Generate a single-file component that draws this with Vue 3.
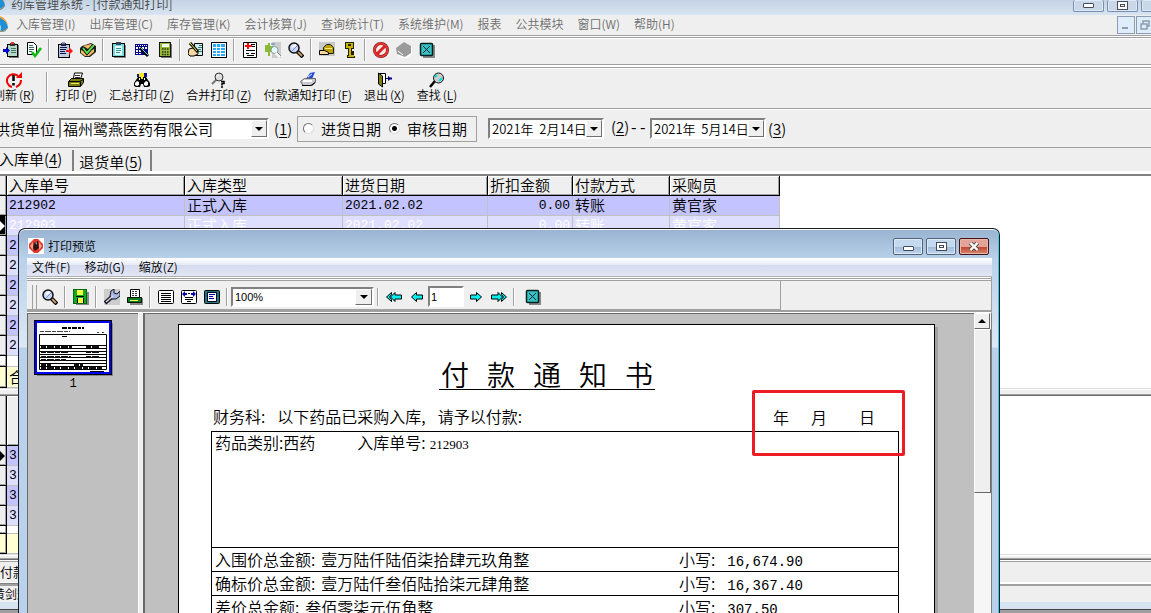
<script setup>
import { ref } from 'vue'

const mainMenu = ['入库管理(I)', '出库管理(C)', '库存管理(K)', '会计核算(J)', '查询统计(T)', '系统维护(M)', '报表', '公共模块', '窗口(W)', '帮助(H)']

const iconGroups = [
  [['clip-in', '入库'], ['doc-check', '审核']],
  [['clip-out', '出库'], ['box-check', '验收']],
  [['clip', '单据'], ['grid-edit', '编辑表格'], ['calc', '计算器']],
  [['hand-doc', '登记'], ['grid', '表格']],
  [['medic', '药品'], ['tree-find', '目录查找'], ['lens', '查询']],
  [['folder', '打开'], ['key', '密码']],
  [['forbid', '停用'], ['stone', '清除'], ['close-box', '关闭']],
]

const actions = [
  { t: '打印', k: 'P', i: 'printer' },
  { t: '汇总打印', k: 'Z', i: 'binoculars' },
  { t: '合并打印', k: 'Z', i: 'lens-q' },
  { t: '付款通知打印', k: 'F', i: 'printer-blue' },
  { t: '退出', k: 'X', i: 'exit' },
  { t: '查找', k: 'L', i: 'find' },
]

const columns = ['入库单号', '入库类型', '进货日期', '折扣金额', '付款方式', '采购员']
const rows = [
  ['212902', '正式入库', '2021.02.02', '0.00', '转账', '黄官家'],
  ['212903', '正式入库', '2021.02.02', '0.00', '转账', '黄官家'],
  ...Array.from({ length: 6 }, () => ['2', '', '', '', '', '']),
]

const dateKind = ref('audit')
const supplier = ref('福州鹭燕医药有限公司')
const from = ref('2021年  2月14日')
const to = ref('2021年  5月14日')
const zoom = ref('100%')
const page = ref('1')

const previewMenu = ['文件(F)', '移动(G)', '缩放(Z)']
const previewIcons = [
  [['lens', '缩放']],
  [['save', '保存']],
  [['wrench', '设置'], ['printer-green', '打印']],
  [['page-lines', '实际大小'], ['page-width', '页宽'], ['page-full', '整页']],
]
const totals = [
  ['入围价总金额:', '壹万陆仟陆佰柒拾肆元玖角整', '16,674.90'],
  ['确标价总金额:', '壹万陆仟叁佰陆拾柒元肆角整', '16,367.40'],
  ['差价总金额:', '叁佰零柒元伍角整', '307.50'],
]
</script>

<template>
  <svg class="defs" aria-hidden="true">
    <symbol id="clip-in" viewBox="0 0 16 16"><path fill="#777" d="M5 3h11v13H6z" /><path fill="#000" d="M4 2h11v13H4z" /><path fill="#b5d8c4" d="M5 3h9v11H5z" /><path fill="#333" d="M7 1h5v3H7z" /><path fill="#e33" d="M8 0h3v2H8z" /><path stroke="#476" d="M8 6.500h5M8 8.500h5M8 10.500h5" /><path fill="#00c" d="M0 7h3V5l4 3.500-4 3.500v-2H0z" /></symbol>
    <symbol id="doc-check" viewBox="0 0 16 16"><path fill="#fff" stroke="#000" d="M1.500.5h6l3 3v9h-9z" /><path stroke="#366" d="M3 3.500h4M3 5.500h5M3 7.500h5M3 9.500h3" /><path fill="none" stroke="#1b1" stroke-width="2.500" d="M6 10l3 4 6-8" /></symbol>
    <symbol id="clip-out" viewBox="0 0 16 16"><path fill="#000" d="M1 2h12v14H1z" /><path fill="#bcd" d="M2 3h10v12H2z" /><path fill="#224" d="M4 1h5v3H4z" /><path fill="#88a" d="M5 0h3v2H5z" /><path stroke="#115" d="M3 5.500h7M3 7.500h6M3 9.500h5M3 11.500h6" /><path fill="#f02020" d="M9 8h3V5l4 4-4 4v-3H9z" /></symbol>
    <symbol id="box-check" viewBox="0 0 16 16"><path fill="#222" d="M2 4l9-3 5 3v6l-6 5H5l-5-4V6z" /><path fill="#f0b860" d="M3 4l8-2 3 2-6 3zM1 8l5 2 8-3v3l-5 4H5l-4-3z" /><path fill="none" stroke="#000" stroke-width="3.500" d="M3 6l4 5 7-8" /><path fill="none" stroke="#5d5" stroke-width="2" d="M3 6l4 5 7-8" /></symbol>
    <symbol id="clip" viewBox="0 0 16 16"><path fill="#888" d="M3 3h12v13H3z" /><path fill="#000" d="M1 1h13v14H1z" /><path fill="#6fdce0" d="M2 2h11v12H2z" /><path fill="#e8ffff" d="M4 4h7v9H4z" /><path fill="#345" d="M5 0h5v3H5z" /><path stroke="#399" d="M5 6.500h5M5 8.500h5M5 10.500h4" /></symbol>
    <symbol id="grid-edit" viewBox="0 0 16 16"><path fill="#008" d="M1 2h13v11H1z" /><path fill="#fff" d="M2 5h2v2H2zM5 5h2v2H5zM8 5h2v2H8zM11 5h2v2h-2zM2 8h2v2H2zM5 8h2v2H5zM2 11h2v1H2zM5 11h2v1H5z" /><path stroke="#fff" stroke-dasharray="1 1" d="M2 3.500h11" /><path stroke="#000" stroke-width="3" d="M6 6l8 8" /><path stroke="#5dd" d="M7 6l7 7" /></symbol>
    <symbol id="calc" viewBox="0 0 16 16"><path fill="#777" d="M4 2h11v14H4z" /><path fill="#111" d="M2 0h12v15H2z" /><path fill="#9ab83c" d="M3 1h10v13H3z" /><path fill="#efe" d="M5 2h7v3H5z" /><path stroke="#231" stroke-width="1.500" stroke-dasharray="1.500 1" d="M5 7h7M5 10h7M5 12.500h7" /></symbol>
    <symbol id="hand-doc" viewBox="0 0 16 16"><path fill="#cef0e8" stroke="#000" d="M6.500 1.500h8v12h-8z" /><path stroke="#377" d="M11 3.500h3M10 5.500h4M10 7.500h3M11 9.500h3" /><path fill="#f4d8a0" stroke="#000" d="M1 7l4-1 5 3v3l-4 2H2L0 12z" /><path stroke="#000" stroke-width="3" d="M2 1l8 9" /><path stroke="#ff3" d="M2 1l7 8" /></symbol>
    <symbol id="grid" viewBox="0 0 16 16"><path fill="#000" d="M0 0h16v16H0z" /><path fill="#fff" d="M1 1h14v14H1z" /><path fill="#28a8ff" d="M2 2h12v12H2z" /><path stroke="#fff" d="M5.500 2v12M9.500 2v12M2 5.500h12M2 8.500h12M2 11.500h12" /></symbol>
    <symbol id="medic" viewBox="0 0 16 16"><path fill="#fff" stroke="#000" d="M1.500.5h13v15h-13z" /><path fill="#f01010" d="M3 3h2V1h2v2h3v2H7v2H5V5H3z" /><path stroke="#000" d="M9 2.500h4M10 4.500h3M4 8.500h9M4 11.500h3M9 11.500h4M5 13.500h7" /></symbol>
    <symbol id="tree-find" viewBox="0 0 16 16"><path fill="#ccc" d="M7 0h9v16H7z" /><path fill="#8b3" d="M0 3h3V1h2v3h3v3H6l2 3H5v4H3v-4H0z" /><path stroke="#48b" d="M6 2h4M7 5h3" /><circle cx="9.500" cy="8" r="3.500" fill="#dff" stroke="#999" /><path stroke="#fff" stroke-width="3" d="M11 11l4 4" /><path stroke="#888" d="M12 10l4 4" /></symbol>
    <symbol id="lens" viewBox="0 0 16 16"><path stroke="#000" stroke-width="4" d="M9 9l6 6" /><path stroke="#c96" stroke-width="2" d="M10 10l4 4" /><circle cx="6" cy="6" r="5" fill="#c8d8ff" stroke="#111" stroke-width="1.500" /><path stroke="#fff" stroke-width="2" d="M4 5l4-2" /><path stroke="#88a" d="M4 9l5-5" /></symbol>
    <symbol id="folder" viewBox="0 0 16 16"><path fill="#c8c8c8" d="M0 0h16v14H0z" /><path fill="#b9a000" stroke="#221" d="M4.500 5.500l3-3h4l3 3v6h-10z" /><path stroke="#ffec70" d="M6 6.500h7" /><path fill="#f4d8a0" stroke="#000" d="M.5 8.500h5l4 2v2h-9z" /></symbol>
    <symbol id="key" viewBox="0 0 16 16"><path fill="#231e00" d="M3 0h9v7h-2v2h2v5h1v2H5v-3h1V7H3z" /><path fill="#c9b500" d="M4 1h7v5H9v7h3v2H6v-1h1V6H4z" /><path fill="#222" d="M6 2h3v2H6z" /></symbol>
    <symbol id="forbid" viewBox="0 0 16 16"><circle cx="8" cy="8" r="6.500" fill="#ffe9e4" stroke="#622" stroke-width="3" /><circle cx="8" cy="8" r="6.500" fill="none" stroke="#e33" stroke-width="2" /><path stroke="#d22" stroke-width="3" d="M4 12l8-8" /></symbol>
    <symbol id="stone" viewBox="0 0 16 16"><path fill="#fff" d="M1 7l8-6 7 4v7l-6 5-8-3z" /><path fill="#9b9b9b" d="M0 6l8-6 7 4v7l-6 4-8-3z" /><path stroke="#fff" d="M2 9l5 4" /></symbol>
    <symbol id="close-box" viewBox="0 0 16 16"><path fill="#888" d="M4 3h12v13H4z" /><rect x="1.500" y="1.500" width="12" height="12" rx="1" fill="#35c2c4" stroke="#002020" stroke-width="1.500" /><path stroke="#023" d="M4 4l7 7M11 4l-7 7" /></symbol>
    <symbol id="refresh" viewBox="0 0 16 16"><path fill="none" stroke="#f00000" stroke-width="2" d="M6 15a6.500 6.500 0 1 1 6-11M10 15q5-2 5-7" /><path fill="#f00000" d="M10 6h6V0z" /><path stroke="#000" stroke-width="2.500" d="M7.500 3v6M7.500 11v2.500" /></symbol>
    <symbol id="printer" viewBox="0 0 16 16"><path fill="#fff" stroke="#000" d="M5.500 6l1-5h8l-2 6" /><path stroke="#333" d="M7 3.500h5M7 5.500h5" /><path fill="#7c7c12" stroke="#000" d="M.5 9.500l3-3h12v4l-3 4H.5z" /><path stroke="#000" d="M1 9.500h11l3-2M12.500 10v4" /><path stroke="#e8e860" d="M3 11.500h8" /></symbol>
    <symbol id="binoculars" viewBox="0 0 16 16"><path fill="#f8e820" d="M5 1h6v7H5z" /><path fill="#10108c" d="M3 2h2v3H3zM10 1h3v4h-3z" /><path fill="#000" d="M4 5h3v2h2V5h3l4 6v3l-2 1h-4l-1-3H7l-1 3H2l-2-1v-3z" /><path fill="#fff" d="M1 11l2-2 2 1v3l-2 1-2-1zM10 11l2-2 2 1v3l-2 1-2-1zM5 6h1v2H5zM10 6h1v2h-1z" /></symbol>
    <symbol id="lens-q" viewBox="0 0 16 16"><path stroke="#777" stroke-width="2" d="M1 12l5-5" /><circle cx="8" cy="5" r="4" fill="#dcdcdc" stroke="#333" /><path fill="none" stroke="#fff" d="M6 5q0-2 2-2" /><path fill="none" stroke="#000" stroke-width="1.500" d="M10 9.500h3v2h-2v2M11 14v2" /></symbol>
    <symbol id="printer-blue" viewBox="0 0 16 16"><path fill="#2048e0" d="M6 7l4-6 5-1-3 7z" /><path stroke="#fff" d="M8 5l4-3" /><path fill="#c8c8d0" stroke="#666" d="M.5 9.500l4-3h11v4l-3 3H3z" /><path stroke="#000" d="M2 13.500h9l4-3" /><path stroke="#fff" stroke-width="2" d="M3 9h9" /></symbol>
    <symbol id="exit" viewBox="0 0 16 16"><path fill="#fff" stroke="#000" d="M3.500 1.500h6v10h-6z" /><path fill="#7e7e10" stroke="#000" d="M2.500 1l4 3v11l-4-3z" /><path fill="#000080" d="M10 6h2V4l2 1.500h2v2h-2L12 9V7h-2z" /></symbol>
    <symbol id="find" viewBox="0 0 16 16"><path stroke="#000" stroke-width="2.500" d="M1 15l5-6" /><circle cx="9.500" cy="6" r="5" fill="#ccc" stroke="#111" /><path stroke="#0dd" d="M6 5l2-2M10 9l3-3" stroke-width="2" /></symbol>
    <symbol id="save" viewBox="0 0 16 16"><path fill="#888" d="M3 3h13v13H3z" /><path fill="#061" d="M0 0h14v15H0z" /><path fill="#1a2" d="M1 1h12v13H1z" /><path fill="#ff4" d="M4 1h6v5H4zM5 9h5v5H5z" /><path fill="#000" d="M3 7h8v1H3zM4 9h1v5H4zM10 9h1v5h-1z" /></symbol>
    <symbol id="wrench" viewBox="0 0 16 16"><path fill="#ccc" d="M0 0h16v16H0z" /><path stroke="#112" stroke-width="4" d="M1 14l8-7" /><path fill="#a9b8e0" stroke="#112" d="M7 2l3-2v4l3 1 3-3v5l-4 3H8L6 7z" /><path stroke="#dde" stroke-width="1.500" d="M2 13l7-6" /></symbol>
    <symbol id="printer-green" viewBox="0 0 16 16"><path fill="#888" d="M3 9h13v7H3z" /><path fill="#fff" stroke="#000" d="M3.500 8V.5h9V8" /><path stroke="#333" stroke-dasharray="2 1" d="M5 2.500h6M5 4.500h6M5 6.500h6" /><path fill="#0b7a20" stroke="#010" d="M.5 8.500h14v5h-14z" /><path stroke="#ff5" d="M3 11.500h8" /></symbol>
    <symbol id="page-lines" viewBox="0 0 16 16"><rect x=".5" y="1.500" width="15" height="13" rx="1" fill="#fff" stroke="#000" /><path stroke="#000" d="M3 4.500h10M3 6.500h10M3 8.500h10M3 10.500h10M3 12.500h10" /></symbol>
    <symbol id="page-width" viewBox="0 0 16 16"><rect x=".5" y="1.500" width="15" height="13" rx="1" fill="#fff" stroke="#000" /><path fill="#00b" d="M1 5l3-3v2h2v2H4v2zM15 5l-3-3v2h-2v2h2v2z" /><path stroke="#000" d="M7 4.500h2M4 8.500h8M4 10.500h8M6 12.500h4" /></symbol>
    <symbol id="page-full" viewBox="0 0 16 16"><rect x=".5" y="1.500" width="15" height="13" rx="1" fill="#277" stroke="#000" /><path fill="#fff" stroke="#003" d="M3.500 3.500h9v9h-9z" /><path stroke="#00a" d="M5 5.500h6M5 7.500h4M5 9.500h5" /></symbol>
    <symbol id="prev" viewBox="0 0 16 16"><path fill="#00f0f0" stroke="#000" d="M2.500 8l5-4.500V6h6v4h-6v2.500z" /></symbol>
    <symbol id="first" viewBox="0 0 16 16"><path fill="#00f0f0" stroke="#000" d="M4.500 8l4.500-4.500V6h6.500v4H9v2.500z" /><path fill="#00f0f0" stroke="#000" d="M5.500 3.500v2L3.500 8l2 2.500v2L.5 8z" /></symbol>
    <symbol id="swirl" viewBox="0 0 16 16"><path fill="#1d8fd8" d="M1 4q6-4 10 0t4 8q-3 5-8 4 3-9-6-12z" /><path fill="#f59a2c" d="M2 0q10-1 13 9-4-7-13-9zM4 16q7 0 11-5-3 6-11 5z" /></symbol>
    <symbol id="gem" viewBox="0 0 16 16"><path fill="#fff" d="M0 0h16v16H0z" /><path fill="#e03a2e" d="M6 1h4l2 2 3 3v4l-3 3-2 2H6l-2-2-3-3V6l3-3z" /><path fill="#f7a28f" d="M2 8l3-4v8zM14 8l-3-4v8z" /><path fill="#301414" d="M6 5l4-2 1 7-4 3-2-3z" /><path fill="#999" d="M7 5l2-1v3z" /></symbol>
  </svg>

  <main class="screen">
    <header class="titlebar">
      <svg class="logo"><use href="#swirl" /></svg>
      <span class="caption">药库管理系统 - [付款通知打印]</span>
      <div class="winbtns">
        <button class="wb" aria-label="最小化"><i class="g-min"></i></button>
        <button class="wb" aria-label="还原"><i class="g-max"></i></button>
        <button class="wb" aria-label="关闭"></button>
      </div>
    </header>
    <nav class="menubar">
      <svg class="logo"><use href="#swirl" /></svg>
      <button v-for="m in mainMenu" :key="m">{{ m }}</button>
      <div class="mdi">
        <button aria-label="最小化子窗口"><svg viewBox="0 0 16 16"><path stroke="#8c9db3" stroke-width="2" d="M4 11h6" /></svg></button>
        <button aria-label="还原子窗口"><svg viewBox="0 0 16 16"><path fill="none" stroke="#8c9db3" stroke-width="1.500" d="M6 7V4h6v5h-2M4 7h6v5H4z" /></svg></button>
      </div>
    </nav>
    <div class="bar icons">
      <div v-for="(g, n) in iconGroups" :key="n" class="group">
        <button v-for="i in g" :key="i[0]" :aria-label="i[1]"><svg><use :href="'#' + i[0]" /></svg></button>
      </div>
    </div>
    <div class="bar actions">
      <button class="first"><svg><use href="#refresh" /></svg><span class="lab"><span>刷新</span><span>(<u>R</u>)</span></span></button>
      <i class="sep"></i>
      <button v-for="a in actions" :key="a.t"><svg><use :href="'#' + a.i" /></svg><span class="lab"><span>{{ a.t }}</span><span>(<u>{{ a.k }}</u>)</span></span></button>
    </div>

    <form class="filters" @submit.prevent>
      <label for="sup" class="suplabel">供货单位</label>
      <div class="combo sup"><select id="sup" v-model="supplier"><option>福州鹭燕医药有限公司</option></select><i class="drop"></i></div>
      <span class="k1">(<u>1</u>)</span>
      <fieldset>
        <label><input v-model="dateKind" type="radio" value="stock" name="kind">进货日期</label>
        <label><input v-model="dateKind" type="radio" value="audit" name="kind">审核日期</label>
      </fieldset>
      <div class="combo date"><input v-model="from" aria-label="开始日期"><button class="drop" aria-label="选择开始日期"></button></div>
      <span class="k2">(<u>2</u>)<span class="dash">--</span></span>
      <div class="combo date"><input v-model="to" aria-label="结束日期"><button class="drop" aria-label="选择结束日期"></button></div>
      <span class="k3">(<u>3</u>)</span>
    </form>
    <div class="tabs">
      <button class="on">入库单(<u>4</u>)</button>
      <button>退货单(<u>5</u>)</button>
    </div>

    <div class="pane">
      <table class="grid">
        <colgroup><col class="c0"><col class="c1"><col class="c2"><col class="c3"><col class="c4"><col class="c5"><col class="c6"></colgroup>
        <thead><tr><th class="sel"></th><th v-for="c in columns" :key="c">{{ c }}</th></tr></thead>
        <tbody>
          <tr v-for="(r, n) in rows" :key="n" :class="{ even: n % 2, current: n === 1 }">
            <td class="sel"><i v-if="n === 1"></i></td>
            <td v-for="(v, j) in r" :key="j" :class="{ num: j === 0 || j === 2 || j === 3, right: j === 3 }">{{ v }}</td>
          </tr>
        </tbody>
        <tfoot>
          <tr class="gap"><td class="sel"></td><td colspan="6"></td></tr>
          <tr class="sum"><td class="sel"></td><td colspan="6">合计</td></tr>
        </tfoot>
      </table>
    </div>
    <div class="splitter"></div>
    <div class="pane">
      <table class="grid lower">
        <colgroup><col class="c0"><col class="c1"></colgroup>
        <thead><tr><th class="sel"></th><th></th></tr></thead>
        <tbody>
          <tr v-for="n in 4" :key="n" :class="{ even: n % 2 === 0 }"><td class="sel"><i v-if="n === 1"></i></td><td class="num">3</td></tr>
        </tbody>
        <tfoot>
          <tr class="gap"><td class="sel"></td><td></td></tr>
          <tr class="sum"><td class="sel"></td><td></td></tr>
        </tfoot>
      </table>
    </div>
    <div class="splitter thin"></div>
    <div class="taskbar"><span>付款</span></div>
    <footer class="status"><span>黄剑辉</span></footer>
    <div class="edge"></div>

    <section class="preview" aria-label="打印预览">
      <header class="ptitle">
        <svg><use href="#gem" /></svg><span>打印预览</span>
        <div class="winbtns">
          <button class="wb" aria-label="最小化"><i class="g-min"></i></button>
          <button class="wb" aria-label="最大化"><i class="g-max"></i></button>
          <button class="wb red" aria-label="关闭"><svg viewBox="0 0 12 10"><path stroke="#444" stroke-width="4.500" d="M2 1l8 8M10 1L2 9" /><path stroke="#fff" stroke-width="2.500" d="M2 1l8 8M10 1L2 9" /></svg></button>
        </div>
      </header>
      <div class="client">
        <nav class="pmenu"><button v-for="m in previewMenu" :key="m">{{ m }}</button></nav>
        <div class="ptools">
          <div class="pbar">
            <i class="grip"></i>
            <div v-for="(g, n) in previewIcons" :key="n" class="group">
              <button v-for="i in g" :key="i[0]" :aria-label="i[1]"><svg><use :href="'#' + i[0]" /></svg></button>
            </div>
            <i class="sep"></i>
            <div class="combo zoom"><select v-model="zoom" aria-label="缩放比例"><option>100%</option></select><i class="drop"></i></div>
            <i class="sep"></i>
            <button aria-label="首页"><svg><use href="#first" /></svg></button>
            <button aria-label="上一页"><svg><use href="#prev" /></svg></button>
            <input v-model="page" class="pageno" aria-label="页码">
            <button class="flip" aria-label="下一页"><svg><use href="#prev" /></svg></button>
            <button class="flip" aria-label="末页"><svg><use href="#first" /></svg></button>
            <i class="sep"></i>
            <button class="quit" aria-label="关闭预览"><svg><use href="#close-box" /></svg></button>
          </div>
        </div>
        <div class="pbody">
          <aside>
            <button class="thumb" aria-label="第 1 页">
              <svg viewBox="0 0 72 49"><path stroke="#000" stroke-width="2" d="M25 5h22" stroke-dasharray="5 1 3 1" /><path stroke="#444" stroke-dasharray="4 1 6 1" d="M3 8.500h30M60 9.500h2M65 9.500h2" /><path fill="none" stroke="#000" d="M2.500 11.500h67v35h-67zM3 22.500h66M3 25.500h66M3 28.500h66M3 31.500h66M3 34.500h66M3 37.500h66M3 40.500h66M3 43.500h66" /><path stroke="#111" stroke-width="2" stroke-dasharray="5 1 7 1" d="M4 24h31M49 24h14M4 29h27M49 29h14M4 34h30M49 34h14M4 37h25M4 42h10M37 42h9M4 45h62" /><path stroke="#000" d="M25 13.500h5M53 48.500h14" /></svg>
            </button>
            <span>1</span>
          </aside>
          <i class="vsplit"></i>
          <div class="view">
            <article class="paper">
              <h1><span>付</span><span>款</span><span>通</span><span>知</span><span>书</span></h1>
              <div class="intro">
                <span>财务科:</span><span>以下药品已采购入库,</span><span>请予以付款:</span>
                <span class="ymd"><span>年</span><span>月</span><span>日</span><i class="mark"></i></span>
              </div>
              <table class="report">
                <tbody>
                  <tr class="head"><td colspan="2"><span>药品类别:西药</span><span class="no">入库单号:</span><b>212903</b></td></tr>
                  <tr v-for="t in totals" :key="t[0]">
                    <td><span>{{ t[0] }}</span><span class="words">{{ t[1] }}</span></td>
                    <td class="amt"><span>小写:</span><b>{{ t[2] }}</b></td>
                  </tr>
                </tbody>
              </table>
            </article>
          </div>
          <div class="scroll"><button aria-label="向上滚动"></button><i class="knob"></i></div>
        </div>
      </div>
    </section>
  </main>
</template>

<style>
html, body { margin: 0; overflow: hidden; }
</style>

<style scoped>
* { box-sizing: border-box; }
.defs { position: absolute; width: 0; height: 0; }
.screen { position: relative; display: flex; flex-direction: column; height: 100vh; overflow: hidden; background: #fff; color: #000; font: 350 15px/20px "Noto Sans CJK SC", sans-serif; white-space: nowrap; }
button, input, select { font: inherit; color: inherit; margin: 0; padding: 0; border: 0; background: none; border-radius: 0; outline: 0; }
button { display: flex; align-items: center; justify-content: center; flex: none; white-space: nowrap; }
svg { display: block; width: 16px; height: 16px; flex: none; fill: none; }
i { display: block; flex: none; }
u { text-underline-offset: 2px; }

.titlebar { flex: none; display: flex; height: 15px; overflow: hidden; background: linear-gradient(#c4d3e4, #d8e4f1); font-size: 12px; line-height: 8px; color: #444; }
.titlebar .logo { margin: -6px 5px 0 -10px; }
.winbtns { display: flex; gap: 3px; margin-left: auto; }
.wb { width: 30px; height: 17px; border: 1px solid #52647c; border-radius: 2px; background: linear-gradient(#c5d9ee 0 50%, #9db9d8 50%, #bfd5ec); box-shadow: inset 0 0 0 1px #dce9f6; }
.titlebar .winbtns { margin-right: -21px; }
.titlebar .wb { width: 31px; height: 12px; border-color: #7c8eb0; border-top: 0; background: #cad7e7; }
.g-min { width: 11px; height: 5px; border: 1px solid #444a5c; background: #fff; border-radius: 1px; margin-top: 3px; }
.titlebar .g-min { margin-top: 0; }
.g-max { width: 11px; height: 9px; border: 1px solid #444a5c; background: #fff; box-shadow: inset 0 0 0 2px #fff, inset 0 0 0 3px #444a5c; }
.wb.red { border-color: #43141a; background: linear-gradient(#e3a398 0 50%, #bf4029 50%, #d88972); box-shadow: inset 0 0 0 1px #e9b6a8; }
.wb.red svg { width: 12px; height: 9px; }
.menubar { flex: none; display: flex; align-items: center; gap: 14px; height: 21px; padding-bottom: 2px; background: #efefef; border-bottom: 1px solid #a0a0a0; font-size: 12px; line-height: 18px; color: #6d6d6d; }
.menubar .logo { margin: 0 -7px 0 -7px; }
.mdi { display: flex; gap: 1px; margin: 0 -3px 0 auto; align-self: flex-start; padding-top: 1px; }
.mdi button { width: 18px; height: 18px; border: 1px solid #8c9db3; background: #dfecf9; }
.bar { flex: none; display: flex; align-items: center; background: #efefef; border-top: 1px solid #a0a0a0; border-bottom: 1px solid #a0a0a0; box-shadow: inset 0 1px #fff; }
.icons { height: 28px; margin-top: 1px; padding-bottom: 2px; }
.group { display: flex; }
.group button { width: 23px; height: 22px; }
.group + .group { border-left: 1px solid #a0a0a0; box-shadow: inset 1px 0 #fff; margin-left: 3px; padding-left: 4px; }
.icons .group:first-child { margin-left: -1px; }
.actions { height: 42px; margin-top: 2px; padding-bottom: 2px; gap: 12px; font-size: 12px; line-height: 14px; }
.actions button { flex-direction: column; }
.actions .first { margin-left: -7px; }
.lab { display: flex; gap: 2px; }
.sep { width: 2px; height: 30px; background: linear-gradient(90deg, #a0a0a0 50%, #fff 50%); }
.actions .sep { margin: 0 -4px 0 -1px; }

.filters { flex: none; display: flex; align-items: center; height: 38px; margin-top: 1px; background: #efefef; border-bottom: 1px solid #a0a0a0; }
.suplabel { margin: 0 4px 0 -5px; }
.combo { display: flex; height: 21px; border: 2px solid; border-color: #808080 #fff #fff #808080; background: #fff; }
.combo select, .combo input { flex: 1; min-width: 0; appearance: none; padding-left: 2px; height: 17px; line-height: 17px; }
.drop { width: 16px; height: 17px; border: 1px solid; border-color: #fff #707070 #707070 #fff; background: #efefef; display: flex; align-items: center; justify-content: center; }
.drop::before { content: ""; border: 4px solid transparent; border-top-color: #000; border-bottom: 0; }
.sup { width: 210px; }
.date { width: 116px; font-size: 13px; }
.k1 { width: 23px; margin-left: 5px; }
fieldset { display: flex; gap: 8px; width: 180px; min-width: 0; height: 26px; margin: 0; padding: 0 8px 0 5px; border: 1px solid #a0a0a0; align-items: center; }
fieldset label { display: flex; align-items: center; gap: 7px; }
fieldset input { appearance: none; width: 11px; height: 11px; border: 1px solid; border-color: #707070 #ddd #ddd #707070; border-radius: 6px; background: #fff; }
fieldset input:checked { background: radial-gradient(#000 2px, #fff 3px); }
fieldset + .date { margin-left: 11px; }
.k2 { width: 39px; margin-left: 7px; }
.dash { font-family: "Liberation Mono", monospace; }
.k3 { margin-left: 2px; }
.tabs { flex: none; display: flex; height: 28px; padding-top: 2px; background: #efefef; border-bottom: 2px solid #808080; box-shadow: inset 0 -3px #fff; }
.tabs button { height: 21px; border-right: 2px solid #808080; padding: 2px 8px 0 5px; }
.tabs .on { margin-left: -6px; padding: 0 10px 3px 5px; }

.pane { flex: none; }
.grid { table-layout: fixed; width: 780px; border-collapse: separate; border-spacing: 0; }
.c0 { width: 7px; } .c1 { width: 178px; } .c2 { width: 158px; } .c3 { width: 145px; } .c4 { width: 85px; } .c5 { width: 97px; } .c6 { width: 110px; }
.grid th, .grid td { height: 20px; padding: 0 0 1px 2px; overflow: hidden; line-height: 18px; text-align: left; font-weight: inherit; border-right: 1px solid #c0c0c0; border-bottom: 1px solid #c0c0c0; }
.grid th { background: #efefef; border-color: #000; box-shadow: inset 1px 1px #fff, inset -1px -1px #a0a0a0; }
.grid td { background: #c3c3ff; }
.grid .even td { background: #dedeff; }
.grid .current td { color: #fff; }
.grid .num { font: 13px/19px "Liberation Mono", monospace; padding-bottom: 0; }
.grid .right { text-align: right; padding-right: 2px; }
.grid tr .sel { padding: 0; background: #efefef; border-color: #000; box-shadow: inset -1px -1px #a0a0a0; }
.grid .current .sel { background: #000; }
.sel i { border: 5px solid transparent; border-left-color: #000; border-right: 0; width: 5px; }
.current .sel i { border-left-color: #fff; }
.grid .gap td { height: 11px; background: #fff; line-height: 0; }
.grid .sum td { height: 21px; background: #ffffd2; border-right: 0; }
.grid .sum .sel { border-right: 1px solid #000; }
.lower { width: 185px; }
.grid.lower th { height: 50px; }
.grid.lower .gap td { height: 8px; }
.grid.lower .sum td { height: 20px; }
.splitter { flex: none; height: 8px; background: #efefef; border-top: 1px solid #dcdcdc; border-bottom: 1px solid #696969; box-shadow: inset 0 1px #fff, inset 0 -1px #a0a0a0; }
.thin { height: 6px; }
.taskbar { flex: none; height: 25px; border-top: 1px solid #fff; border-bottom: 1px solid #a0a0a0; background: #efefef; box-shadow: inset 0 1px #a0a0a0, inset 0 -2px #fff; font-size: 13px; line-height: 22px; }
.taskbar span { display: block; width: 40px; border-bottom: 1px solid #808080; }
.status { flex: none; height: 17px; border-top: 1px solid #a0a0a0; background: #efefef; font-size: 12px; line-height: 15px; }
.status span { display: block; margin-left: -7px; }
.edge { flex: 1; border-top: 7px solid #d6e3f1; background: linear-gradient(#444 1px, #a0a0a0 1px); }

.preview { position: absolute; top: 228px; left: 18px; right: 151px; bottom: 0; display: flex; flex-direction: column; padding: 0 7px 0 8px; border: 1px solid #1c1c24; border-bottom: 0; border-radius: 7px 7px 0 0; box-shadow: inset 0 1px #fff, inset -1px 0 #35c8ee; background: linear-gradient(#98b3d0, #b9d1ea 30px, #dce8f5 118px, #b9d1ea 119px); font-size: 12px; line-height: 16px; }
.ptitle { flex: none; display: flex; align-items: center; height: 29px; padding: 5px 3px 0 1px; gap: 4px; }
.ptitle .winbtns { align-self: flex-start; margin-top: 4px; }
.client { flex: 1; min-height: 0; display: flex; flex-direction: column; background: #efefef; }
.pmenu { flex: none; display: flex; gap: 14px; height: 19px; padding-left: 5px; background: linear-gradient(#fff, #e6eaf6 7px, #d5dbee 7px, #e2e6f6); border-bottom: 1px solid #b0b0b0; }
.ptools { flex: none; display: flex; height: 35px; padding-top: 4px; border-bottom: 2px solid #a0a0a0; background: linear-gradient(#fff 1px, #a0a0a0 1px 2px, #fff 2px 3px, #a0a0a0 3px 4px, #efefef 4px); border-right: 1px solid #a0a0a0; }
.pbar { display: flex; align-items: center; flex: 0 0 754px; height: 29px; padding-top: 3px; border-right: 1px solid #a0a0a0; border-bottom: 1px solid #a0a0a0; }
.pbar button { width: 23px; height: 22px; }
.grip { width: 5px; height: 24px; margin: 0 1px 0 5px; border: solid #a0a0a0; border-width: 0 1px; }
.pbar .sep { height: 18px; margin: 0 3px; }
.pbar .quit { margin-left: 3px; }
.zoom { width: 143px; height: 20px; font: 11px "Liberation Sans", sans-serif; }
.zoom select, .zoom .drop { height: 16px; }
.zoom .drop { width: 17px; }
.pageno { width: 36px; height: 21px; border: 2px solid; border-color: #808080 #fff #fff #808080; background: #fff; padding-left: 1px; font: 11px "Liberation Sans", sans-serif; }
.flip svg { transform: scaleX(-1); }
.pbody { flex: 1; min-height: 0; display: flex; border-right: 1px solid #808080; border-top: 1px solid #fff; }
aside { flex: 0 0 111px; border: solid #696969; border-width: 1px 0 0 1px; background: #c0c0c0; padding: 7px; display: flex; flex-direction: column; align-items: flex-start; gap: 2px; font: 12px/17px "Liberation Mono", monospace; }
aside span { width: 76px; text-align: center; }
.thumb { width: 76px; height: 53px; border: 2px solid #0000f0; background: #fff; box-shadow: 0 0 0 1px #000, 2px 2px #888; }
.thumb svg { width: 72px; height: 49px; }
.vsplit { width: 5px; background: linear-gradient(90deg, #fff 1px, #efefef 1px); }
.view { flex: 1; min-width: 0; display: flex; overflow: hidden; border: solid #696969; border-width: 1px 0 0 2px; background: #c0c0c0; padding: 10px 39px 0 33px; }
.paper { flex: 1; min-width: 0; padding: 33px 35px 0 32px; border: 1px solid #000; border-bottom: 0; background: #fff; box-shadow: 3px 3px #a0a0a0; font-size: 16px; line-height: 20px; }
h1 { display: flex; gap: 18px; width: 216px; height: 32px; margin: 0 0 0 228px; padding-left: 2px; border-bottom: 1px solid #000; font-size: 28px; line-height: 32px; font-weight: inherit; }
.intro { display: flex; gap: 12px; padding: 16px 0 5px 2px; }
.ymd { position: relative; display: flex; gap: 22px; margin: 1px 24px -1px auto; }
.ymd span:last-of-type { margin-left: 10px; }
.mark { position: absolute; left: -21px; right: -30px; top: -17px; height: 66px; border: 3px solid #ed1c24; border-radius: 2px; z-index: 1; }
.report { width: 100%; table-layout: fixed; border-collapse: collapse; }
.report td { border: solid #000; border-width: 1px 0; padding: 1px 4px; height: 24px; line-height: 20px; vertical-align: top; }
.report tr > :first-child { border-left-width: 1px; padding-left: 3px; }
.report tr > :last-child { border-right-width: 1px; }
.report .head td { height: 116px; padding-top: 0; }
.report .no { margin-left: 42px; }
.head b { margin-left: 4px; font: 13px "Liberation Serif", serif; }
.words { margin-left: 6px; }
.report .amt { padding-left: 124px; }
.amt b { margin-left: 12px; font: 14px/16px "Liberation Mono", monospace; }
.scroll { flex: none; width: 17px; background: #f6f6f6; }
.scroll button { width: 16px; height: 16px; border: 1px solid; border-color: #fff #696969 #696969 #fff; background: #efefef; }
.scroll button::before { content: ""; border: 4px solid transparent; border-bottom-color: #000; border-top: 0; }
.knob { width: 17px; height: 164px; border: 1px solid; border-color: #fff #696969 #696969 #fff; background: #efefef; }
</style>
